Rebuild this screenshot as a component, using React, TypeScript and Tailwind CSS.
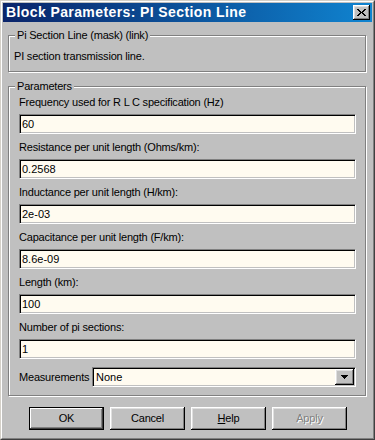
import React from "react";

const fields = [
  { label: "Frequency used for R L C specification (Hz)", value: "60" },
  { label: "Resistance per unit length (Ohms/km):", value: "0.2568" },
  { label: "Inductance per unit length (H/km):", value: "2e-03" },
  { label: "Capacitance per unit length (F/km):", value: "8.6e-09" },
  { label: "Length (km):", value: "100" },
  { label: "Number of pi sections:", value: "1" },
];

function Group({ title, className, children }: { title: string; className?: string; children: React.ReactNode }) {
  return (
    <div className={`relative w-[358px] border border-[#808080] shadow-[inset_1px_1px_0_#fff,1px_1px_0_#fff] ${className ?? ""}`}>
      <span className="absolute -top-[7px] left-[6px] px-[2px] bg-[#c0c0c0] leading-[13px] whitespace-nowrap">{title}</span>
      {children}
    </div>
  );
}

function Field({ value }: { value: string }) {
  return (
    <div className="h-[20px] border border-t-[#808080] border-l-[#808080] border-r-white border-b-white bg-[#fffbf0] shadow-[inset_1px_1px_0_#000,inset_-1px_-1px_0_#c0c0c0] pl-[2px] leading-[18px] tracking-normal">
      {value}
    </div>
  );
}

function Btn({ children, primary, disabled }: { children: React.ReactNode; primary?: boolean; disabled?: boolean }) {
  const edge = primary
    ? "border border-black shadow-[inset_-1px_-1px_0_#404040,inset_1px_1px_0_#fff,inset_-2px_-2px_0_#808080]"
    : "shadow-[inset_-1px_-1px_0_#000,inset_1px_1px_0_#fff,inset_-2px_-2px_0_#808080,inset_2px_2px_0_#dfdfdf]";
  return (
    <div
      className={`w-[75px] h-[23px] flex items-center justify-center bg-[#c0c0c0] ${edge} ${
        disabled ? "text-[#808080] [text-shadow:1px_1px_0_#fff]" : ""
      }`}
    >
      {children}
    </div>
  );
}

function CloseGlyph() {
  const rects = [
    [0, 0, 2], [7, 0, 2],
    [1, 1, 2], [6, 1, 2],
    [2, 2, 2], [5, 2, 2],
    [3, 3, 3],
    [2, 4, 2], [5, 4, 2],
    [1, 5, 2], [6, 5, 2],
    [0, 6, 2], [7, 6, 2],
  ];
  return (
    <svg width="9" height="7" viewBox="0 0 9 7" shapeRendering="crispEdges">
      {rects.map(([x, y, w], i) => (
        <rect key={i} x={x} y={y} width={w} height={1} fill="#000" />
      ))}
    </svg>
  );
}

export default function App() {
  return (
    <div className="w-[375px] h-[440px] bg-[#c0c0c0] border border-t-[#d4d0c8] border-l-[#d4d0c8] border-r-[#404040] border-b-[#404040] font-['Liberation_Sans',Arial,sans-serif] text-[11px] tracking-[-0.2px] text-black">
      <div className="h-full flex flex-col border border-t-white border-l-white border-r-[#808080] border-b-[#808080] p-px">
        <div className="h-[19px] flex items-center justify-between pl-[3px] pr-[2px] bg-linear-to-r from-[#0a246a] to-[#1084d0]">
          <span className="text-white font-bold text-[14px] tracking-[0.4px] leading-[19px] whitespace-nowrap">
            Block Parameters: PI Section Line
          </span>
          <div className="w-[17px] h-[15px] flex items-center justify-center bg-[#c0c0c0] shadow-[inset_-1px_-1px_0_#000,inset_1px_1px_0_#fff,inset_-2px_-2px_0_#808080,inset_2px_2px_0_#dfdfdf]">
            <CloseGlyph />
          </div>
        </div>

        <div className="flex flex-col pl-[5px]">
          <Group title="Pi Section Line (mask) (link)" className="mt-[13px] pt-[14px] pb-[8px] pl-[5px]">
            <div className="leading-[13px]">PI section transmission line.</div>
          </Group>

          <Group title="Parameters" className="mt-[14px] pt-[9px] pb-[8px] pl-[10px] pr-[9px]">
            <div className="flex flex-col gap-[7px]">
              {fields.map((f) => (
                <div key={f.label} className="flex flex-col gap-[5px]">
                  <div className="leading-[13px] whitespace-nowrap">{f.label}</div>
                  <Field value={f.value} />
                </div>
              ))}
            </div>
            <div className="mt-[8px] flex items-center justify-between">
              <span className="leading-[13px]">Measurements</span>
              <div className="w-[264px] h-[20px] flex border border-t-[#808080] border-l-[#808080] border-r-white border-b-white bg-[#fffbf0] shadow-[inset_1px_1px_0_#000,inset_-1px_-1px_0_#c0c0c0] p-px">
                <span className="flex-1 pl-[2px] leading-[16px] tracking-normal">None</span>
                <div className="w-[19px] h-full flex items-center justify-center bg-[#c0c0c0] shadow-[inset_-1px_-1px_0_#000,inset_1px_1px_0_#fff,inset_-2px_-2px_0_#808080,inset_2px_2px_0_#dfdfdf]">
                  <svg width="7" height="4" viewBox="0 0 7 4" shapeRendering="crispEdges">
                    <path d="M0 0h7v1h-1v1h-1v1h-1v1h-1v-1h-1v-1h-1v-1h-1z" fill="#000" />
                  </svg>
                </div>
              </div>
            </div>
          </Group>
        </div>

        <div className="mt-[11px] pl-[26px] flex gap-[6px]">
          <Btn primary>OK</Btn>
          <Btn>Cancel</Btn>
          <Btn>
            <span>
              <span className="underline">H</span>elp
            </span>
          </Btn>
          <Btn disabled>Apply</Btn>
        </div>
      </div>
    </div>
  );
}
